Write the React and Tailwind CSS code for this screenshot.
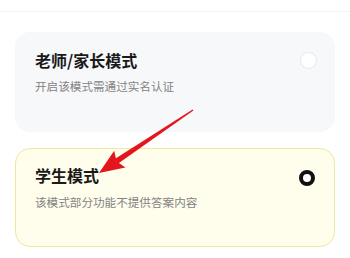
export default function App() {
  const font = { fontFamily: '"Noto Sans CJK SC", "Noto Sans", sans-serif' }
  return (
    <div className="relative w-[350px] h-[258px] bg-white overflow-hidden" style={font}>
      <div className="h-[12px] border-b border-[#f3f3f3]" />

      <div className="flex flex-col gap-[16px] px-[15px] pt-[20px]">
        <div className="h-[100px] rounded-[15px] bg-[#f7f8fa] pl-[20px] pr-[18px] pt-[17px]">
          <div className="flex items-center justify-between h-[22px]">
            <span className="text-[16px] leading-[22px] font-bold text-[#1a1a1a]">老师/家长模式</span>
            <span className="w-[17px] h-[17px] rounded-full bg-white border border-[#e6e7ea]" />
          </div>
          <p className="mt-[6px] text-[11.6px] leading-[18px] text-[#838383]">开启该模式需通过实名认证</p>
        </div>

        <div className="h-[99px] rounded-[15px] bg-[#fffdeb] border-[1.5px] border-[#eee7a0] pl-[19px] pr-[19px] pt-[15px]">
          <div className="flex items-center justify-between h-[22px]">
            <span className="text-[16px] leading-[22px] font-bold text-[#1a1a1a]">学生模式</span>
            <span className="mt-[5px] w-[16px] h-[16px] rounded-full bg-white border-[4px] border-[#111111]" />
          </div>
          <p className="mt-[7px] text-[11.6px] leading-[18px] text-[#838383]">该模式部分功能不提供答案内容</p>
        </div>
      </div>

      <svg className="absolute left-0 top-0 pointer-events-none" width="350" height="258" viewBox="0 0 350 258">
        <polygon points="193.4,110.5 192.6,109.5 114.8,159.0 118.2,163.6" fill="#e3161d" />
        <polygon points="99,173 114.2,150.8 116.5,161.3 125.4,167.4" fill="#e3161d" />
      </svg>
    </div>
  )
}
